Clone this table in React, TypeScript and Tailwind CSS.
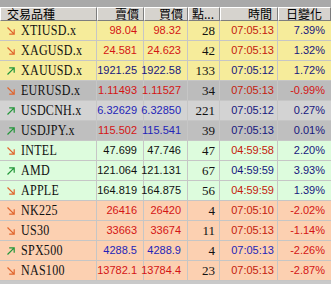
import React from 'react';

type Dir = 'up' | 'down';

interface Quote {
  symbol: string;
  dir: Dir;
  bg: string;
  sell: string;
  buy: string;
  pts: string;
  time: string;
  change: string;
  sellColor: string;
  buyColor: string;
  timeColor: string;
  changeColor: string;
}

const RED = 'text-[#d41414]';
const NAVY = 'text-[#16167e]';
const BLUE = 'text-[#2424b8]';
const BLACK = 'text-[#111111]';
const TRED = 'text-[#c4200c]';

const YELLOW = 'bg-[#f6ec9b]';
const GREEN = 'bg-[#ddfcdd]';
const SALMON = 'bg-[#fcd0b1]';

const quotes: Quote[] = [
  { symbol: 'XTIUSD.x', dir: 'down', bg: YELLOW, sell: '98.04', buy: '98.32', pts: '28', time: '07:05:13', change: '7.39%', sellColor: RED, buyColor: RED, timeColor: TRED, changeColor: NAVY },
  { symbol: 'XAGUSD.x', dir: 'down', bg: YELLOW, sell: '24.581', buy: '24.623', pts: '42', time: '07:05:13', change: '1.32%', sellColor: RED, buyColor: RED, timeColor: TRED, changeColor: NAVY },
  { symbol: 'XAUUSD.x', dir: 'up', bg: YELLOW, sell: '1921.25', buy: '1922.58', pts: '133', time: '07:05:12', change: '1.72%', sellColor: NAVY, buyColor: NAVY, timeColor: NAVY, changeColor: NAVY },
  { symbol: 'EURUSD.x', dir: 'down', bg: 'bg-[#bcbcbc]', sell: '1.11493', buy: '1.11527', pts: '34', time: '07:05:13', change: '-0.99%', sellColor: RED, buyColor: RED, timeColor: TRED, changeColor: RED },
  { symbol: 'USDCNH.x', dir: 'up', bg: 'bg-[#d3d3d3]', sell: '6.32629', buy: '6.32850', pts: '221', time: '07:05:12', change: '0.27%', sellColor: BLUE, buyColor: BLUE, timeColor: NAVY, changeColor: NAVY },
  { symbol: 'USDJPY.x', dir: 'up', bg: 'bg-[#bfbfbf]', sell: '115.502', buy: '115.541', pts: '39', time: '07:05:13', change: '0.01%', sellColor: RED, buyColor: BLUE, timeColor: NAVY, changeColor: NAVY },
  { symbol: 'INTEL', dir: 'down', bg: GREEN, sell: '47.699', buy: '47.746', pts: '47', time: '04:59:58', change: '2.20%', sellColor: BLACK, buyColor: BLACK, timeColor: TRED, changeColor: NAVY },
  { symbol: 'AMD', dir: 'up', bg: GREEN, sell: '121.064', buy: '121.131', pts: '67', time: '04:59:59', change: '3.93%', sellColor: BLACK, buyColor: BLACK, timeColor: NAVY, changeColor: NAVY },
  { symbol: 'APPLE', dir: 'down', bg: GREEN, sell: '164.819', buy: '164.875', pts: '56', time: '04:59:59', change: '1.39%', sellColor: BLACK, buyColor: BLACK, timeColor: TRED, changeColor: NAVY },
  { symbol: 'NK225', dir: 'down', bg: SALMON, sell: '26416', buy: '26420', pts: '4', time: '07:05:10', change: '-2.02%', sellColor: RED, buyColor: RED, timeColor: TRED, changeColor: RED },
  { symbol: 'US30', dir: 'down', bg: SALMON, sell: '33663', buy: '33674', pts: '11', time: '07:05:13', change: '-1.14%', sellColor: RED, buyColor: RED, timeColor: TRED, changeColor: RED },
  { symbol: 'SPX500', dir: 'up', bg: SALMON, sell: '4288.5', buy: '4288.9', pts: '4', time: '07:05:13', change: '-2.26%', sellColor: BLUE, buyColor: BLUE, timeColor: BLUE, changeColor: RED },
  { symbol: 'NAS100', dir: 'down', bg: SALMON, sell: '13782.1', buy: '13784.4', pts: '23', time: '07:05:13', change: '-2.87%', sellColor: RED, buyColor: RED, timeColor: TRED, changeColor: RED },
];

const Arrow: React.FC<{ dir: Dir }> = ({ dir }) =>
  dir === 'down' ? (
    <svg width="10" height="10" viewBox="0 0 10 10" className="shrink-0">
      <path d="M1.5 1.5 L8.2 8.2 M3.2 8.2 H8.2 V3.2" fill="none" stroke="#e0642c" strokeWidth="1.2" />
    </svg>
  ) : (
    <svg width="10" height="10" viewBox="0 0 10 10" className="shrink-0">
      <path d="M1.5 8.5 L8.2 1.8 M3.2 1.8 H8.2 V6.8" fill="none" stroke="#23963a" strokeWidth="1.2" />
    </svg>
  );

const headCell =
  'h-[14px] flex items-center border-t border-l border-white border-r border-b border-r-[#7e7e7e] border-b-[#7e7e7e] text-[12px] leading-[12px] text-black whitespace-nowrap';

const cell = 'h-full flex items-center justify-end border-r border-[#c6c6c6] whitespace-nowrap';
const num = "font-['Liberation_Sans',Arial,sans-serif] text-[11px]";

export default function App() {
  return (
    <div className="w-[331px] h-[284px] bg-[#c9c9c9] overflow-hidden font-['Noto_Sans_CJK_TC','Liberation_Sans',sans-serif]">
      <div className="h-[7px] bg-[#a9a9a9]" />

      <div className="flex bg-[#d6d3ce]">
        <div className={`${headCell} w-[97px] justify-start pl-[6px]`}>交易品種</div>
        <div className={`${headCell} w-[47px] justify-end pr-[4px]`}>賣價</div>
        <div className={`${headCell} w-[44px] justify-end pr-[4px]`}>買價</div>
        <div className={`${headCell} w-[32px] justify-start pl-[3px]`}>點...</div>
        <div className={`${headCell} w-[58px] justify-end pr-[5px]`}>時間</div>
        <div className={`${headCell} w-[53px] justify-end pr-[8px]`}>日變化</div>
      </div>

      {quotes.map((q) => (
        <div key={q.symbol} className={`flex h-[20px] border-b border-[#c6c6c6] ${q.bg}`}>
          <div className="w-[97px] h-full flex items-center gap-[5px] pl-[6px] border-r border-[#c6c6c6]">
            <Arrow dir={q.dir} />
            <span className="inline-block origin-left scale-x-[0.86] font-['Liberation_Serif',serif] text-[14px] text-[#111] tracking-[0.3px]">
              {q.symbol}
            </span>
          </div>
          <div className={`${cell} w-[47px] pr-[6px] ${num} ${q.sellColor}`}>{q.sell}</div>
          <div className={`${cell} w-[44px] pr-[6px] ${num} ${q.buyColor}`}>{q.buy}</div>
          <div className={`${cell} w-[32px] pr-[4px] font-['Liberation_Serif',serif] text-[13px] text-[#111]`}>
            {q.pts}
          </div>
          <div className={`${cell} w-[58px] pr-[3px] ${num} ${q.timeColor}`}>{q.time}</div>
          <div className={`flex h-full items-center justify-end w-[53px] pr-[6px] ${num} ${q.changeColor}`}>
            {q.change}
          </div>
        </div>
      ))}
    </div>
  );
}
